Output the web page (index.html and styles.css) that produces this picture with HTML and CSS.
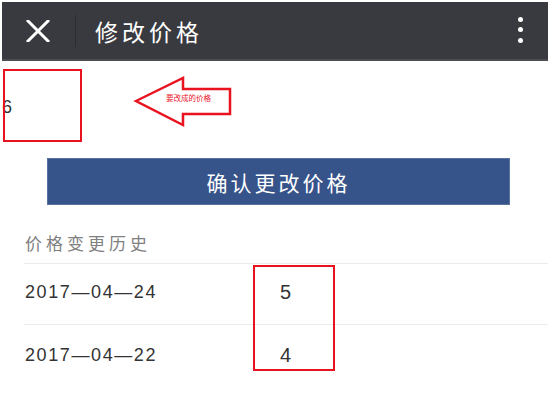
FILE: index.html
```html
<!DOCTYPE html>
<html lang="zh-CN">
<head>
<meta charset="utf-8">
<title>修改价格</title>
<link rel="stylesheet" href="styles.css">
</head>
<body>
<header class="topbar">
  <svg class="close" width="24" height="22" viewBox="0 0 24 22" aria-hidden="true">
    <path d="M2 1 L22 21 M22 1 L2 21" stroke="#ffffff" stroke-width="3" stroke-linecap="square" fill="none"/>
  </svg>
  <span class="sep"></span>
  <h1 class="title">修改价格</h1>
  <div class="more"><i></i><i></i><i></i></div>
</header>

<div class="input-row">
  <span class="value">6</span>
  <span class="mark-box"></span>
  <div class="arrow">
    <svg width="100" height="52" viewBox="0 0 100 52" aria-hidden="true">
      <polygon points="3,25 50,2 50,13 97,13 97,38 50,38 50,49" fill="#ffffff" stroke="#e8131f" stroke-width="2.5" stroke-linejoin="miter"/>
    </svg>
    <span class="arrow-text">要改成的价格</span>
  </div>
</div>

<button class="confirm">确认更改价格</button>

<div class="history-title">价格变更历史</div>
<div class="history">
  <div class="row"><span class="date">2017—04—24</span><span class="price">5</span></div>
  <div class="row"><span class="date">2017—04—22</span><span class="price">4</span></div>
  <span class="mark-col"></span>
</div>
</body>
</html>
```
FILE: styles.css
```css
html, body {
  margin: 0;
  background: #ffffff;
}
body {
  padding: 2px;
  font-family: "Noto Sans CJK SC", "Liberation Sans", sans-serif;
  color: #333333;
}
.topbar {
  height: 57px;
  background: #393a3f;
  border-bottom: 2px solid #4c4d52;
  display: flex;
  align-items: center;
  padding: 0 25px 0 24px;
}
.close {
  display: block;
  flex: none;
}
.sep {
  width: 1px;
  height: 32px;
  background: #2c2d31;
  margin-left: 25px;
  flex: none;
}
.title {
  margin: 0 0 0 19px;
  font-size: 23px;
  font-weight: normal;
  letter-spacing: 4px;
  color: #ffffff;
  flex: 1;
  line-height: 30px;
}
.more {
  display: flex;
  flex-direction: column;
  gap: 5.5px;
  margin-top: -2px;
}
.more i {
  display: block;
  width: 5px;
  height: 5px;
  border-radius: 50%;
  background: #ffffff;
}
.input-row {
  position: relative;
  height: 73px;
  margin-top: 8px;
  display: flex;
  align-items: center;
  padding-left: 0;
}
.value {
  font-family: "Liberation Sans", sans-serif;
  font-size: 18px;
  color: #333333;
  padding-top: 4px;
}
.mark-box {
  position: absolute;
  left: 1px;
  top: 0;
  width: 79px;
  height: 73px;
  box-sizing: border-box;
  border: 2px solid #e8131f;
}
.arrow {
  position: absolute;
  left: 131px;
  top: 7px;
  width: 100px;
  height: 52px;
}
.arrow svg {
  display: block;
}
.arrow-text {
  position: absolute;
  left: 33px;
  top: 17px;
  font-size: 7.5px;
  line-height: 10px;
  color: #e8131f;
  white-space: nowrap;
}
.confirm {
  display: block;
  margin: 16px 0 0 45px;
  width: 463px;
  height: 47px;
  background: #36538a;
  border: 1px solid #5a72a2;
  color: #ffffff;
  font-family: "Noto Sans CJK SC", sans-serif;
  font-size: 21px;
  letter-spacing: 3px;
  padding: 0;
}
.history-title {
  margin: 26px 0 0 23px;
  height: 24px;
  line-height: 24px;
  font-size: 17px;
  letter-spacing: 4px;
  color: #808080;
}
.history {
  position: relative;
  margin: 8px 0 0 22px;
  border-top: 1px solid #ebebeb;
}
.row {
  height: 60px;
  display: flex;
  align-items: center;
  padding-bottom: 4px;
  box-sizing: border-box;
}
.row + .row {
  border-top: 1px solid #ebebeb;
  height: 61px;
  padding-bottom: 0;
}
.date {
  width: 255px;
  padding-left: 1px;
  font-family: "Liberation Sans", sans-serif;
  font-size: 18px;
  letter-spacing: 1.6px;
  color: #333333;
}
.price {
  font-family: "Liberation Sans", sans-serif;
  font-size: 20px;
  color: #333333;
}
.mark-col {
  position: absolute;
  left: 229px;
  top: 1px;
  width: 82px;
  height: 106px;
  box-sizing: border-box;
  border: 2px solid #e8131f;
}
```
